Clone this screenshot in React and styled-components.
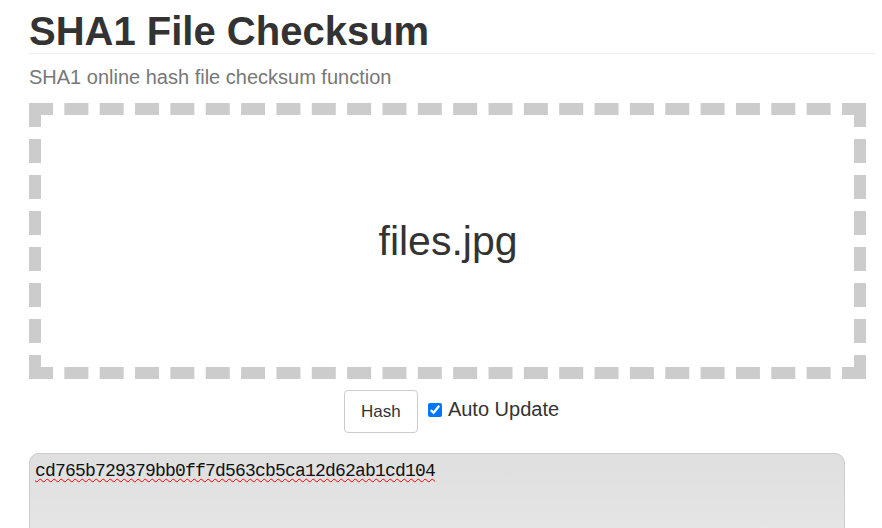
import React, { useState } from "react";
import styled, { createGlobalStyle } from "styled-components";

const Global = createGlobalStyle`
  html, body {
    margin: 0;
    padding: 0;
    background: #ffffff;
    overflow: hidden;
  }
  body {
    font-family: "Liberation Sans", Arial, sans-serif;
    color: #333333;
  }
`;

const Page = styled.div`
  width: 882px;
  height: 528px;
  box-sizing: border-box;
  padding: 0 7px 0 29px;
  overflow: hidden;
`;

const Header = styled.div`
  border-bottom: 1px solid #eeeeee;
  padding-top: 8px;
  height: 54px;
  box-sizing: border-box;
`;

const Title = styled.h1`
  margin: 0;
  font-size: 40px;
  line-height: 46px;
  font-weight: bold;
  color: #333333;
`;

const Lead = styled.p`
  margin: 0;
  padding-top: 11px;
  font-size: 20px;
  line-height: 24px;
  color: #777777;
`;

const DropZone = styled.div`
  margin-top: 14px;
  width: 837px;
  height: 276px;
  box-sizing: border-box;
  border: 12px dashed #cccccc;
  display: flex;
  align-items: center;
  justify-content: center;
  font-size: 41px;
  color: #333333;
  padding: 0 0 0 1px;
`;

const Controls = styled.div`
  width: 837px;
  box-sizing: border-box;
  padding-left: 8px;
  display: flex;
  justify-content: center;
  align-items: center;
  gap: 10px;
  margin-top: 11px;
`;

const Button = styled.button`
  font-family: "Liberation Sans", Arial, sans-serif;
  font-size: 17px;
  color: #333333;
  background: #ffffff;
  border: 1px solid #cccccc;
  border-radius: 4px;
  height: 43px;
  width: 74px;
  padding: 0;
`;

const Check = styled.label`
  display: flex;
  align-items: center;
  gap: 6px;
  font-size: 20px;
  color: #333333;
  margin-bottom: 4px;

  input {
    margin: 0;
    width: 14px;
    height: 14px;
    accent-color: #0075ff;
  }
`;

const Output = styled.div`
  margin-top: 20px;
  width: 816px;
  height: 120px;
  box-sizing: border-box;
  border: 1px solid #cccccc;
  border-radius: 10px;
  background: linear-gradient(#dfdfdf, #e8e8e8);
  padding: 6px 5px;
  font-family: "Liberation Mono", "Courier New", monospace;
  font-size: 18px;
  letter-spacing: -0.8px;
  line-height: 22px;
  color: #111111;
`;

const Hash = styled.span`
  text-decoration: underline wavy #ff0000;
  text-decoration-thickness: 1px;
  text-underline-offset: 2px;
`;

export default function App() {
  const [auto, setAuto] = useState(true);
  return (
    <Page>
      <Global />
      <Header>
        <Title>SHA1 File Checksum</Title>
      </Header>
      <Lead>SHA1 online hash file checksum function</Lead>
      <DropZone>files.jpg</DropZone>
      <Controls>
        <Button>Hash</Button>
        <Check>
          <input
            type="checkbox"
            checked={auto}
            onChange={(e) => setAuto(e.target.checked)}
          />
          Auto Update
        </Check>
      </Controls>
      <Output>
        <Hash>cd765b729379bb0ff7d563cb5ca12d62ab1cd104</Hash>
      </Output>
    </Page>
  );
}
